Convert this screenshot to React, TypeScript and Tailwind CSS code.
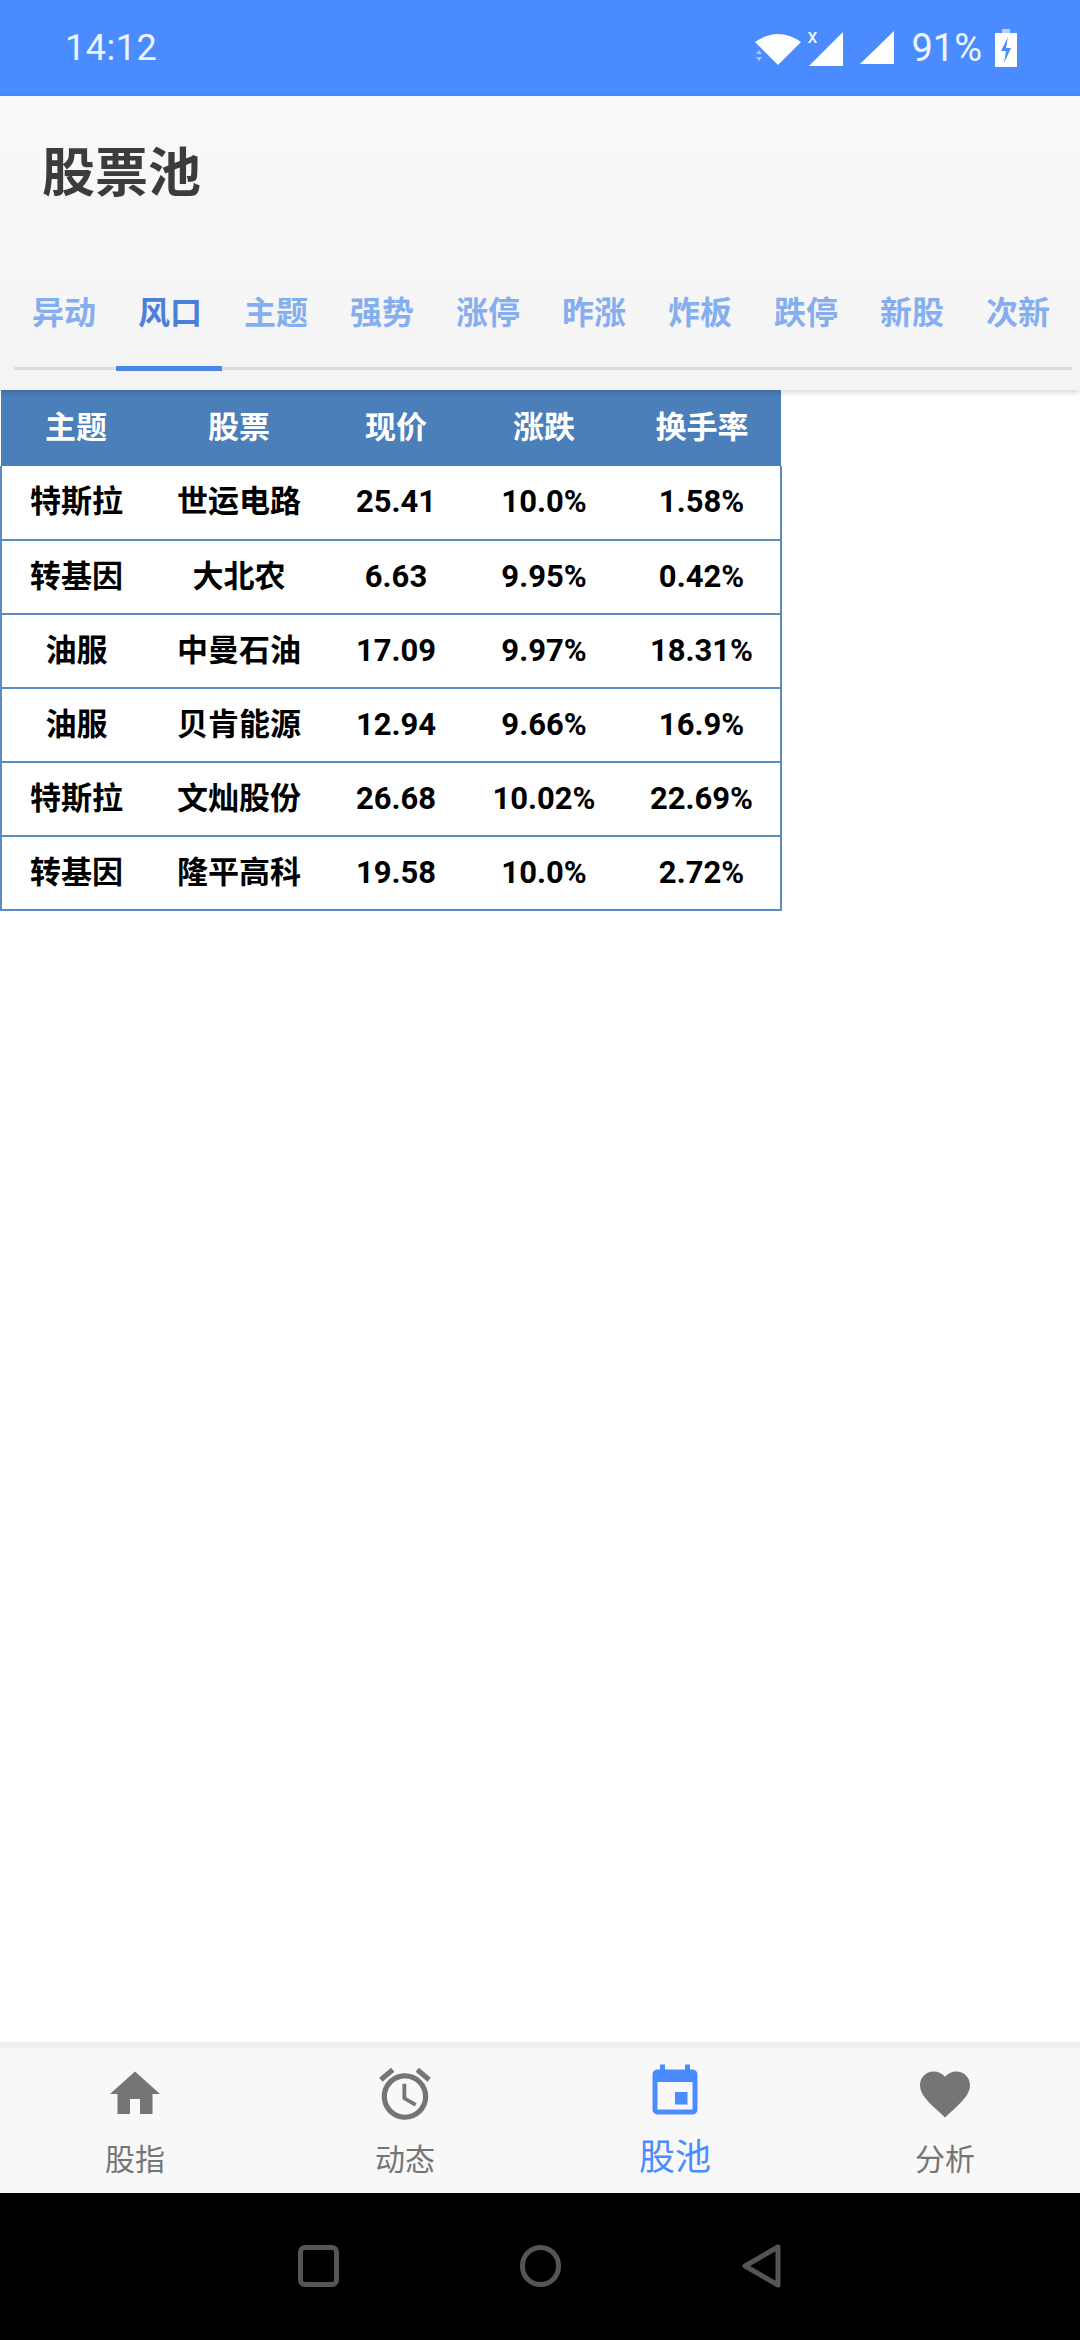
import React from "react";
import { MdHome, MdAccessAlarm, MdEvent, MdFavorite } from "react-icons/md";

const tabs = ["异动", "风口", "主题", "强势", "涨停", "昨涨", "炸板", "跌停", "新股", "次新"];
const rows = [
  ["特斯拉", "世运电路", "25.41", "10.0%", "1.58%"],
  ["转基因", "大北农", "6.63", "9.95%", "0.42%"],
  ["油服", "中曼石油", "17.09", "9.97%", "18.31%"],
  ["油服", "贝肯能源", "12.94", "9.66%", "16.9%"],
  ["特斯拉", "文灿股份", "26.68", "10.02%", "22.69%"],
  ["转基因", "隆平高科", "19.58", "10.0%", "2.72%"],
];
const heads = ["主题", "股票", "现价", "涨跌", "换手率"];

function NavItem({ icon, label, active }: { icon: React.ReactNode; label: string; active?: boolean }) {
  return (
    <div className={`flex-1 flex flex-col items-center ${active ? "text-[#4a8cff]" : "text-[#757575]"}`}>
      <div className={`h-[64px] flex items-center justify-center ${active ? "mt-[12px]" : "mt-[14px]"}`}>{icon}</div>
      <div className={active ? "text-[36px] leading-[50px] mt-[9px]" : "text-[30px] leading-[44px] mt-[12px]"}>{label}</div>
    </div>
  );
}

export default function App() {
  return (
    <div className="w-[1080px] h-[2340px] flex flex-col bg-white overflow-hidden font-['Roboto','Noto_Sans_CJK_SC',sans-serif]">
      <div className="h-[96px] shrink-0 bg-[#4a8cff] flex items-center justify-between pl-[65px] pr-[63px] text-white">
        <span className="text-[36px] tracking-[0.5px] opacity-90">14:12</span>
        <div className="flex items-center">
          <svg width="50" height="36" viewBox="0 0 50 36" className="mr-[1px]">
            <path d="M2 12 Q25 -4 48 12 L25 35 Z" fill="white" />
            <path d="M3 24 L6 20 L9 24 Z M3 27 L9 27 L6 31 Z" fill="#a9c8ff" />
          </svg>
          <div className="relative ml-[3px] w-[46px] h-[40px]">
            <svg width="46" height="40" viewBox="0 0 46 40">
              <path d="M2 38 L36 4 V38 Z" fill="white" />
            </svg>
            <span className="absolute left-[0px] top-[-4px] text-[20px] leading-[24px] text-white">x</span>
          </div>
          <svg width="36" height="36" viewBox="0 0 36 36" className="ml-[6px]">
            <path d="M1 34 L35 1 V34 Z" fill="white" />
          </svg>
          <span className="text-[38px] ml-[16px] opacity-90">91%</span>
          <svg width="22" height="38" viewBox="0 0 22 38" className="ml-[13px]">
            <rect x="7" y="0" width="8" height="5" fill="#b9d2ff" />
            <rect x="0" y="4" width="22" height="34" fill="white" />
            <path d="M13 8 L6 22 H11 L9 34 L16 19 H11 Z" fill="#4a8cff" />
          </svg>
        </div>
      </div>

      <div className="h-[294px] shrink-0 flex flex-col bg-gradient-to-b from-[#f9f9f9] to-[#f4f4f4] shadow-[0_2px_6px_rgba(0,0,0,0.18)] relative">
        <h1 className="text-[53px] leading-[70px] font-bold text-[#3c3c3c] pl-[42px] mt-[43px]">股票池</h1>
        <div className="flex pl-[11px] mt-[82px]">
          {tabs.map((t, i) => (
            <div
              key={t}
              className={`w-[106px] shrink-0 text-center text-[32px] leading-[44px] font-bold ${i === 1 ? "text-[#4a80d8]" : "text-[#85aef0]"}`}
            >
              {t}
            </div>
          ))}
        </div>
        <div className="ml-[14px] mr-[8px] mt-[32px] h-[3px] bg-[#dddddd] relative">
          <div className="absolute left-[102px] top-[-1px] w-[106px] h-[5px] bg-[#4a86e4]" />
        </div>
      </div>

      <div className="flex-1 min-h-0">
        <table className="w-[780px] table-fixed border-collapse">
          <colgroup>
            <col className="w-[150px]" />
            <col className="w-[176px]" />
            <col className="w-[138px]" />
            <col className="w-[158px]" />
            <col className="w-[158px]" />
          </colgroup>
          <thead>
            <tr className="h-[76px] bg-[#4a7fb9] text-white">
              {heads.map((h) => (
                <th key={h} className="text-center text-[31px] font-bold p-0">{h}</th>
              ))}
            </tr>
          </thead>
          <tbody>
            {rows.map((r, i) => (
              <tr key={i} className="h-[74px] text-black">
                {r.map((c, j) => (
                  <td
                    key={j}
                    className={`text-center text-[31px] font-bold p-0 border-b-2 border-[#5c8cc2] ${j === 0 ? "border-l-2" : ""} ${j === 4 ? "border-r-2" : ""}`}
                  >
                    {c}
                  </td>
                ))}
              </tr>
            ))}
          </tbody>
        </table>
      </div>

      <div className="h-[151px] shrink-0 flex bg-[#f8f8f8] border-t-[6px] border-[#f0f0f0]">
        <NavItem icon={<MdHome size={60} />} label="股指" />
        <NavItem icon={<MdAccessAlarm size={62} />} label="动态" />
        <NavItem active icon={<MdEvent size={60} />} label="股池" />
        <NavItem icon={<MdFavorite size={60} />} label="分析" />
      </div>

      <div className="h-[147px] shrink-0 bg-black flex items-center justify-center">
        <div className="flex items-center gap-[181px] mt-[-2px]">
          <div className="w-[41px] h-[42px] rounded-[7px] border-[5px] border-[#555555]" />
          <div className="w-[41px] h-[42px] rounded-full border-[5px] border-[#555555]" />
          <svg width="40" height="44" viewBox="0 0 40 44">
            <path d="M36 3 V41 L3 22 Z" fill="none" stroke="#555555" strokeWidth="5" strokeLinejoin="round" />
          </svg>
        </div>
      </div>
    </div>
  );
}
